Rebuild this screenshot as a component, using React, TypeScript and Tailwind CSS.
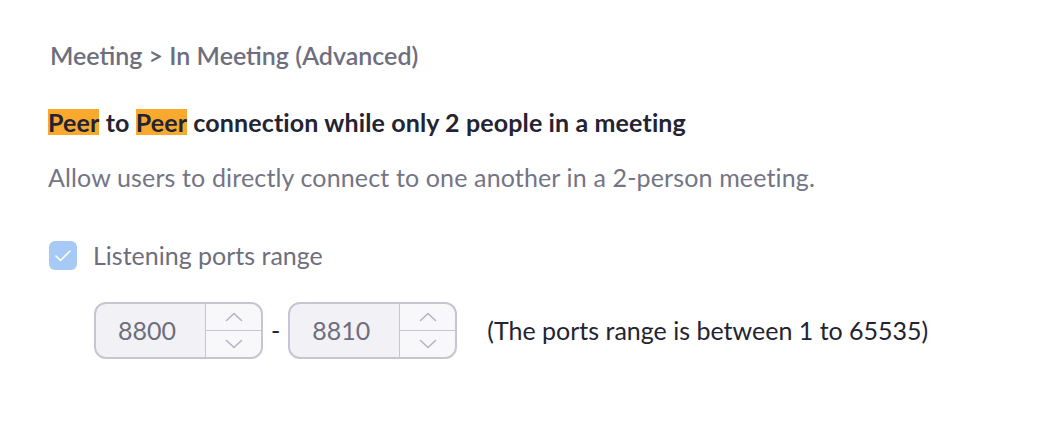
import React from "react";

const Spinner = () => (
  <div className="flex flex-col w-[56px] border-l border-[#c5c5d3] bg-[#f8f8fb] rounded-r-[11px]">
    <button className="flex-1 flex items-center justify-center border-b border-[#c5c5d3] text-[#b4b4c2]">
      <svg width="18" height="10" viewBox="0 0 18 10" fill="none">
        <path d="M1.5 8.5L9 1.5l7.5 7" stroke="currentColor" strokeWidth="1.6" strokeLinecap="round" strokeLinejoin="round" />
      </svg>
    </button>
    <button className="flex-1 flex items-center justify-center text-[#b4b4c2]">
      <svg width="18" height="10" viewBox="0 0 18 10" fill="none">
        <path d="M1.5 1.5L9 8.5l7.5-7" stroke="currentColor" strokeWidth="1.6" strokeLinecap="round" strokeLinejoin="round" />
      </svg>
    </button>
  </div>
);

const PortInput = ({ value }: { value: string }) => (
  <div className="flex w-[169px] h-[57px] rounded-[12px] border-2 border-[#c5c5d3] bg-[#f2f2f6] overflow-hidden">
    <div className="flex-1 flex items-center pl-[22px] text-[25px] text-[#6e6e7e]">{value}</div>
    <Spinner />
  </div>
);

export default function App() {
  return (
    <div className="w-[1044px] h-[426px] bg-white pl-[48px] pt-[40px] font-['Lato','Liberation_Sans',sans-serif]">
      <div className="text-[25px] leading-[30px] font-semibold text-[#6e6e7e] pl-[2px]">
        Meeting &gt; In Meeting (Advanced)
      </div>
      <div className="mt-[37px] text-[25px] leading-[30px] font-bold tracking-[0.13px] text-[#232333]">
        <span className="inline-block leading-[26px] bg-[#faa92f]">Peer</span> to{" "}
        <span className="inline-block leading-[26px] bg-[#faa92f]">Peer</span> connection while only 2 people in a
        meeting
      </div>
      <div className="mt-[25px] text-[25px] leading-[30px] tracking-[0.14px] text-[#747487]">
        Allow users to directly connect to one another in a 2-person meeting.
      </div>
      <label className="mt-[48px] flex items-center gap-[16px] pl-[1px]">
        <span className="w-[28px] h-[29px] rounded-[6px] bg-[#a7c9f6] flex items-center justify-center">
          <svg width="18" height="13" viewBox="0 0 18 13" fill="none">
            <path d="M2 7l4.5 4.5L16 2" stroke="white" strokeWidth="1.6" strokeLinecap="round" strokeLinejoin="round" />
          </svg>
        </span>
        <span className="text-[25px] leading-[30px] text-[#6e6e7e]">Listening ports range</span>
      </label>
      <div className="mt-[32px] ml-[46px] flex items-center">
        <PortInput value="8800" />
        <span className="mx-[8px] text-[25px] text-[#232333]">-</span>
        <PortInput value="8810" />
        <span className="ml-[30px] text-[25px] text-[#232333]">(The ports range is between 1 to 65535)</span>
      </div>
    </div>
  );
}
